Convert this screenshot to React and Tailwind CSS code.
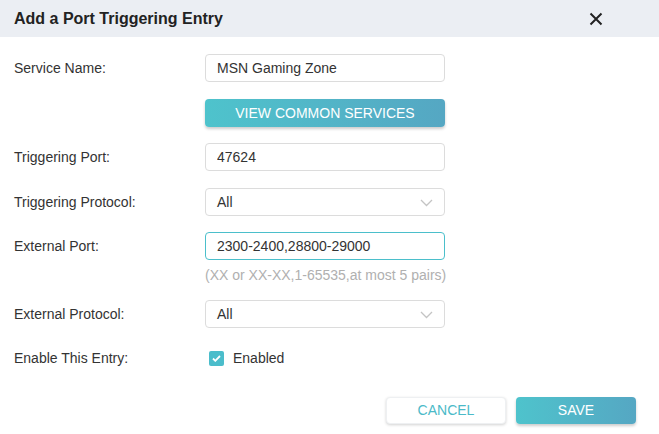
import React, { useState } from "react";

const font = { fontFamily: '"Liberation Sans", Arial, sans-serif' };

function Chevron() {
  return (
    <svg width="13" height="8" viewBox="0 0 13 8" className="absolute right-[12px] top-[11px]">
      <path d="M1 1l5.5 5.5L12 1" fill="none" stroke="#c4c4c4" strokeWidth="1.3" />
    </svg>
  );
}

function Row({ label, children, className = "" }) {
  return (
    <div className={`flex items-center ${className}`}>
      <div className="w-[191px] text-[14px] text-[#333]">{label}</div>
      <div className="w-[240px]">{children}</div>
    </div>
  );
}

export default function App() {
  const [enabled, setEnabled] = useState(true);

  const inputCls =
    "w-full h-[28px] border border-[#dcdcdc] rounded-[4px] px-[11px] text-[14px] text-[#333] outline-none bg-white";

  return (
    <div className="w-[659px] h-[434px] bg-white overflow-hidden" style={font}>
      {/* Header */}
      <div className="h-[37px] bg-[#ebeef3] flex items-center justify-between pl-[14px] pr-[56px]">
        <h2 className="text-[16px] font-bold text-[#222]">Add a Port Triggering Entry</h2>
        <svg width="14" height="14" viewBox="0 0 14 14">
          <path d="M1.5 1.5l11 11M12.5 1.5l-11 11" stroke="#222" strokeWidth="2" />
        </svg>
      </div>

      {/* Form */}
      <div className="pl-[14px] pt-[17px] flex flex-col">
        <Row label="Service Name:">
          <input className={inputCls} defaultValue="MSN Gaming Zone" />
        </Row>

        <Row label="" className="mt-[17px]">
          <button className="w-full h-[28px] rounded-[4px] text-white text-[14px] bg-gradient-to-r from-[#4ec3cc] to-[#55a7c3] shadow-[0_2px_3px_rgba(0,0,0,0.2)]">
            VIEW COMMON SERVICES
          </button>
        </Row>

        <Row label="Triggering Port:" className="mt-[16px]">
          <input className={inputCls} defaultValue="47624" />
        </Row>

        <Row label="Triggering Protocol:" className="mt-[17px]">
          <div className="relative">
            <div className={`${inputCls} flex items-center`}>All</div>
            <Chevron />
          </div>
        </Row>

        <Row label="External Port:" className="mt-[16px]">
          <input
            className="w-full h-[28px] border border-[#4bbfcb] rounded-[4px] px-[11px] text-[14px] text-[#333] outline-none bg-white"
            defaultValue="2300-2400,28800-29000"
          />
        </Row>
        <div className="ml-[191px] mt-[6px] text-[14px] text-[#b0b0b0] leading-[18px]">
          (XX or XX-XX,1-65535,at most 5 pairs)
        </div>

        <Row label="External Protocol:" className="mt-[16px]">
          <div className="relative">
            <div className={`${inputCls} flex items-center`}>All</div>
            <Chevron />
          </div>
        </Row>

        <Row label="Enable This Entry:" className="mt-[16px] h-[28px]">
          <label className="flex items-center pl-[4px] cursor-pointer" onClick={() => setEnabled(!enabled)}>
            <span className={`w-[15px] h-[15px] rounded-[2px] flex items-center justify-center ${enabled ? "bg-[#4bbdcb]" : "border border-[#ccc]"}`}>
              {enabled && (
                <svg width="9" height="7" viewBox="0 0 9 7">
                  <path d="M1 3.5l2.3 2.3L8 1" fill="none" stroke="#fff" strokeWidth="1.8" />
                </svg>
              )}
            </span>
            <span className="ml-[9px] text-[14px] text-[#333]">Enabled</span>
          </label>
        </Row>
      </div>

      {/* Footer */}
      <div className="flex justify-end gap-[10px] pr-[23px] mt-[25px]">
        <button className="w-[120px] h-[27px] rounded-[4px] bg-white text-[#4bbac8] text-[14px] border border-[#eef0f2] shadow-[0_1px_3px_rgba(0,0,0,0.18)]">
          CANCEL
        </button>
        <button className="w-[120px] h-[27px] rounded-[4px] text-white text-[14px] bg-gradient-to-r from-[#4ec3cc] to-[#55a7c3] shadow-[0_2px_3px_rgba(0,0,0,0.2)]">
          SAVE
        </button>
      </div>
    </div>
  );
}
